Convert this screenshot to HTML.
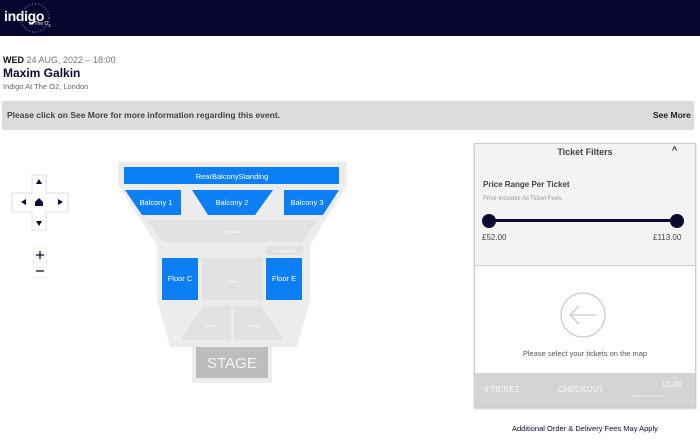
<!DOCTYPE html>
<html><head><meta charset="utf-8"><style>
*{margin:0;padding:0;box-sizing:border-box}
body{width:700px;height:447px;overflow:hidden;background:#fff;font-family:"Liberation Sans",sans-serif;position:relative;color:#222}
.a{position:absolute}
</style></head><body>
<div class="a" style="left:0;top:0;width:700px;height:36px;background:#05052d"></div>
<div class="a" style="left:4px;top:8px;color:#fff;font-size:14px;font-weight:bold;letter-spacing:-0.3px">indigo</div>
<div class="a" style="left:29px;top:21px;color:#fff;font-size:5px">at The O<sub>2</sub></div>
<svg class="a" style="left:18px;top:1px" width="34" height="34"><circle cx="17" cy="17" r="14" fill="none" stroke="#5a6ad0" stroke-width="2" stroke-dasharray="1 2" opacity=".7"/></svg>
<div class="a" style="left:3px;top:55px;font-size:9px;color:#777"><b style="color:#111">WED</b> 24 AUG, 2022 – 18:00</div>
<div class="a" style="left:3px;top:66px;font-size:12px;font-weight:bold;color:#0a0a30">Maxim Galkin</div>
<div class="a" style="left:3px;top:82px;font-size:7.5px;color:#666">Indigo At The O2, London</div>
<div class="a" style="left:2px;top:101px;width:692px;height:29px;background:#dcdcdc"></div>
<div class="a" style="left:7px;top:110px;font-size:8.5px;font-weight:bold;color:#444">Please click on See More for more information regarding this event.</div>
<div class="a" style="left:653px;top:110px;font-size:8.5px;font-weight:bold;color:#222">See More</div>
<svg class="a" style="left:0;top:170px" width="80" height="110">
<path d="M32 5h14v18h22v19H46v18H32V42H12V23h20z" fill="#fff" stroke="#ddd"/>
<path d="M39 9l3 5h-6z M39 56l3-5h-6z M21 32l5-3v6z M63 32l-5-3v6z" fill="#0a0a30"/>
<path d="M35 32l4-4 4 4v4h-8z" fill="#0a0a30"/>
<rect x="34" y="78" width="12" height="30" fill="#fff" stroke="#eee"/>
<path d="M36 85h8M40 81v8M36 101h8" stroke="#0a0a30" stroke-width="1.3"/>
</svg>
<svg class="a" style="left:0;top:0" width="700" height="447" font-family="Liberation Sans,sans-serif">
<path d="M118 162H347V185L310 245V300L297 347H170L157 300V245L118 185Z" fill="#ececec"/>
<rect x="192" y="346" width="80" height="37" fill="#ececec"/>
<rect x="196" y="347" width="72" height="31" fill="#bdbdbd"/>
<text x="232" y="368" font-size="15" fill="#f4f4f4" text-anchor="middle">STAGE</text>
<rect x="124" y="167" width="215" height="17" fill="#0d7ff5"/>
<text x="232" y="179" font-size="7.5" fill="#fff" text-anchor="middle">RearBalconyStanding</text>
<path d="M125 190H181V215H142Z" fill="#0d7ff5"/><text x="156" y="205" font-size="7.5" fill="#fff" text-anchor="middle">Balcony 1</text>
<path d="M192 190H273L255 215H208Z" fill="#0d7ff5"/><text x="232" y="205" font-size="7.5" fill="#fff" text-anchor="middle">Balcony 2</text>
<path d="M284 190H339L323 215H284Z" fill="#0d7ff5"/><text x="307" y="205" font-size="7.5" fill="#fff" text-anchor="middle">Balcony 3</text>
<path d="M147 220H317L303 242H163Z" fill="#e2e2e2"/><text x="232" y="233" font-size="3.5" fill="#fff" text-anchor="middle">KingsRow</text>
<rect x="266" y="246" width="36" height="9" fill="#e2e2e2"/><text x="284" y="252" font-size="3" fill="#fff" text-anchor="middle">AccessibleSeating</text>
<rect x="162" y="258" width="36" height="42" fill="#0d7ff5"/><text x="180" y="281" font-size="7.5" fill="#fff" text-anchor="middle">Floor C</text>
<rect x="202" y="258" width="61" height="42" fill="#e2e2e2"/><text x="232" y="283" font-size="3.5" fill="#fff" text-anchor="middle">FloorD</text>
<rect x="266" y="258" width="36" height="42" fill="#0d7ff5"/><text x="284" y="281" font-size="7.5" fill="#fff" text-anchor="middle">Floor E</text>
<path d="M203 306H231V340H181Z" fill="#e2e2e2"/><text x="210" y="327" font-size="3.5" fill="#fff" text-anchor="middle">FloorA</text>
<path d="M234 306H261L284 340H234Z" fill="#e2e2e2"/><text x="254" y="327" font-size="3.5" fill="#fff" text-anchor="middle">FloorB</text>
</svg>
<div class="a" style="left:474px;top:143px;width:222px;height:265px;border:1px solid #ccc;background:#fff;box-shadow:0 1px 2px #ccc"></div>
<div class="a" style="left:475px;top:144px;width:220px;height:122px;background:#f3f3f3;border-bottom:1px solid #ccc"></div>
<div class="a" style="left:475px;top:147px;width:220px;text-align:center;font-size:9px;font-weight:bold;color:#444">Ticket Filters</div>
<div class="a" style="left:672px;top:145px;font-size:9px;font-weight:bold;color:#111">^</div>
<div class="a" style="left:483px;top:180px;font-size:8px;font-weight:bold;color:#444">Price Range Per Ticket</div>
<div class="a" style="left:483px;top:196px;font-size:6px;color:#999">Price Includes All Ticket Fees.</div>
<div class="a" style="left:489px;top:219px;width:189px;height:3px;background:#0a0a30"></div>
<div class="a" style="left:482px;top:214px;width:14px;height:14px;border-radius:50%;background:#0a0a30"></div>
<div class="a" style="left:670px;top:214px;width:14px;height:14px;border-radius:50%;background:#0a0a30"></div>
<div class="a" style="left:482px;top:233px;font-size:8px;color:#444">£52.00</div>
<div class="a" style="left:653px;top:233px;font-size:8px;color:#444">£113.00</div>
<svg class="a" style="left:560px;top:292px" width="46" height="46"><circle cx="23" cy="23" r="22" fill="none" stroke="#ccc" stroke-width="1.3"/><path d="M10 23H36M10 23l9-9M10 23l9 9" fill="none" stroke="#ccc" stroke-width="1.3"/></svg>
<div class="a" style="left:475px;top:349px;width:220px;text-align:center;font-size:7.5px;color:#555">Please select your tickets on the map</div>
<div class="a" style="left:475px;top:373px;width:220px;height:34px;background:#d4d4d4"></div>
<div class="a" style="left:484px;top:385px;font-size:8px;font-weight:bold;color:#eee">0 TICKET</div>
<div class="a" style="left:558px;top:385px;font-size:8px;font-weight:bold;color:#eee">CHECKOUT</div>
<div class="a" style="left:662px;top:380px;font-size:8px;font-weight:bold;color:#eee">£0.00</div>
<div class="a" style="left:630px;top:394px;font-size:3.5px;color:#eee">Includes All Ticket Fees</div>
<div class="a" style="left:512px;top:424px;font-size:7.5px;color:#0a0a40">Additional Order &amp; Delivery Fees May Apply</div>
</body></html>
